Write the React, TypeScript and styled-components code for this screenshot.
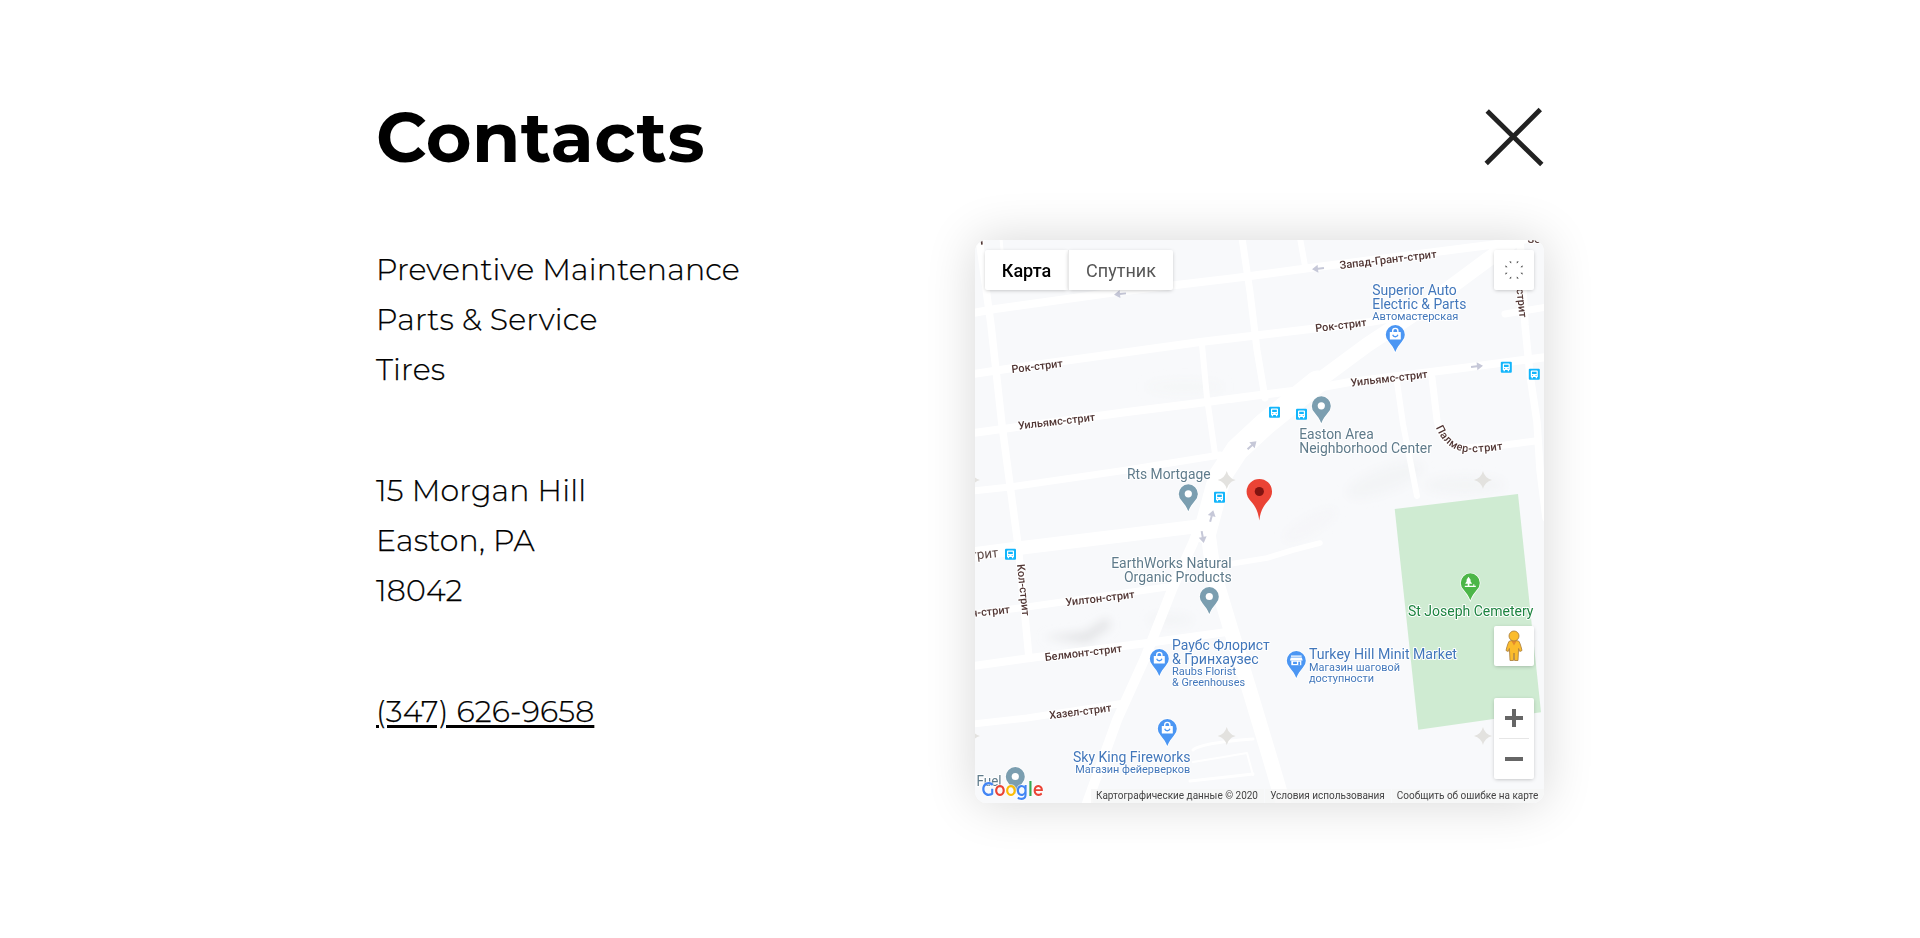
import React from "react";
import styled, { createGlobalStyle } from "styled-components";

const GlobalStyle = createGlobalStyle`
  * { box-sizing: border-box; }
  body { margin: 0; background: #fff; color: #000; }
`;

const Page = styled.main`
  width: 1170px;
  min-height: 938px;
  margin: 0 auto;
  padding-top: 94px;
  font-family: Montserrat, Inter, "Noto Sans", sans-serif;
`;

const Header = styled.header`
  display: flex;
  align-items: center;
  justify-content: space-between;
  height: 86px;
  margin-bottom: 60px;
`;

const Title = styled.h1`
  margin: 0 0 0 1px;
  font-size: 70px;
  font-weight: 700;
  line-height: 86px;
  letter-spacing: 0.4px;
`;

const CloseButton = styled.button`
  display: flex;
  padding: 0;
  border: 0;
  background: none;
  cursor: pointer;
`;

const Columns = styled.div`
  display: flex;
  justify-content: space-between;
`;

const Info = styled.div`
  display: flex;
  flex-direction: column;
  gap: 71px;
  padding: 5px 0 0 1px;
  font-size: 30px;
  font-weight: 300;
  line-height: 50px;
  letter-spacing: 0.2px;
  -webkit-text-stroke: 0.25px #000;
`;

const Block = styled.p`
  display: flex;
  flex-direction: column;
  align-items: flex-start;
  margin: 0;
`;

const Line = styled.span`
  white-space: nowrap;
`;

const Phone = styled.a`
  color: inherit;
  white-space: nowrap;
  text-decoration: underline;
  text-decoration-thickness: 3px;
  text-underline-offset: 3px;
`;

const MapCard = styled.section`
  position: relative;
  width: 569px;
  height: 563px;
  overflow: hidden;
  border-radius: 12px;
  background: #f8f9fb;
  font-family: Roboto, sans-serif;
`;

const MapFrame = styled.div`
  width: 569px;
  margin-right: 1px;
  border-radius: 12px;
  box-shadow: 0 0 50px rgba(0, 0, 0, 0.16);
`;

const MapTypes = styled.div`
  position: absolute;
  top: 10px;
  left: 10px;
  display: flex;
`;

const MapType = styled.button<{ $active?: boolean }>`
  width: ${(p) => (p.$active ? 83 : 105)}px;
  height: 40px;
  padding: 0;
  border: 0;
  border-left: ${(p) => (p.$active ? "0" : "1px solid #e9e9e9")};
  border-radius: ${(p) => (p.$active ? "2px 0 0 2px" : "0 2px 2px 0")};
  background: #fff;
  box-shadow: 0 1px 4px -1px rgba(0, 0, 0, 0.3);
  font-family: Roboto, sans-serif;
  font-size: 18px;
  font-weight: ${(p) => (p.$active ? 500 : 400)};
  color: ${(p) => (p.$active ? "#000" : "#565656")};
`;

const MapButton = styled.button<{ $top: number; $height?: number }>`
  position: absolute;
  top: ${(p) => p.$top}px;
  right: 10px;
  display: flex;
  flex-direction: column;
  align-items: center;
  justify-content: center;
  width: 40px;
  height: ${(p) => p.$height ?? 40}px;
  padding: 0;
  border: 0;
  border-radius: 2px;
  background: #fff;
  box-shadow: 0 1px 4px -1px rgba(0, 0, 0, 0.3);
`;

const ZoomHalf = styled.span`
  display: flex;
  align-items: center;
  justify-content: center;
  width: 30px;
  height: 40px;
  & + & { border-top: 1px solid #e6e6e6; height: 41px; }
`;

const Attribution = styled.footer`
  position: absolute;
  right: 0;
  bottom: 0;
  display: flex;
  gap: 1px;
  height: 14px;
`;

const Credit = styled.span<{ $width: number }>`
  width: ${(p) => p.$width}px;
  padding-right: 1px;
  background: rgba(245, 245, 245, 0.75);
  color: #444;
  font-size: 10px;
  line-height: 14px;
  text-align: center;
  white-space: nowrap;
`;

const Drawing = styled.svg`
  display: block;
`;

const roads: [string, number][] = [
  ["M4,-2 L16,85 L27,185 L43,305 L47,345 L54,418", 7.5],
  ["M-2,73 L20,69 L142,52 L268,37 L342,27 L515,5 L572,-4", 8],
  ["M-2,134 L38,128 L225,102 L285,95 L395,82 L440,74", 8],
  ["M530,74 L572,67", 7],
  ["M-2,193 L152,172 L232,162 L285,155 L342,148 L375,142 L488,128 L548,120 L572,117", 8],
  ["M-2,251 L35,247 L152,230 L245,215", 7],
  ["M-2,314 L45,308 L152,295 L225,286", 13.5],
  ["M267,-2 L275,52 L282,110 L290,158", 7],
  ["M227,105 L232,158 L240,214", 6],
  ["M325,-2 L330,26", 6],
  ["M26,-2 L27,10", 3],
  ["M545,0 L550,85 L555,135 L562,182 L565,230 L571,278", 7.5],
  ["M457,138 L462,180 Q467,207 490,208 L530,205 L560,201", 7],
  ["M422,142 L428,184 L442,256", 6],
  ["M345,303 L318,310 L292,318 L255,324", 5.5],
  ["M-2,374 L52,367 L192,347", 7],
  ["M-2,426 L55,418 L172,403 L252,392", 8],
  ["M-2,484 L52,478 L150,463", 7],
  ["M545,-4 L515,18 L442,72 L392,105 L342,142 L300,172", 15],
  ["M342,142 L290,184 L262,210 L245,236 L238,262 L230,292", 23],
  ["M225,285 L218,303 L198,347 L170,418 L142,480 L111,566", 10],
  ["M232,285 L238,330 L256,390 L276,455 L294,515 L309,566", 15],
  ["M218,510 Q225,503 278,499", 3],
  ["M218,522 L272,513 L278,535", 2],
  ["M215,541 L278,534", 3],
];

type LabelData = {
  x: number; y: number; w?: number; t: string; size?: number; angle?: number;
  color: string; bold?: boolean; anchor?: "end";
};
const street = "#523735";
const blue = "#4277bb";
const slate = "#5f7b8b";

const labels: LabelData[] = [
  { x: 365, y: 29, w: 97.5, t: "Запад-Грант-стрит", angle: -6.7, color: street, bold: true },
  { x: 340.7, y: 92, w: 51.5, t: "Рок-стрит", angle: -6.7, color: street, bold: true },
  { x: 37, y: 133, w: 51.5, t: "Рок-стрит", angle: -6.7, color: street, bold: true },
  { x: 376, y: 146.5, w: 77.5, t: "Уильямс-стрит", angle: -6.5, color: street, bold: true },
  { x: 43.5, y: 189.5, w: 77.5, t: "Уильямс-стрит", angle: -6.5, color: street, bold: true },
  { x: 91, y: 366, w: 69.5, t: "Уилтон-стрит", angle: -6.7, color: street, bold: true },
  { x: 70.3, y: 421, w: 77.5, t: "Белмонт-стрит", angle: -6.7, color: street, bold: true },
  { x: 74.7, y: 479, w: 62.5, t: "Хазел-стрит", angle: -7, color: street, bold: true },
  { x: 42, y: 324.5, w: 52, t: "Кол-стрит", angle: 84, color: street, bold: true },
  { x: 541.5, y: 49, w: 29, t: "стрит", angle: 84, color: street, bold: true },
  { x: 35.3, y: 373, w: 39, t: "н-стрит", angle: -6, color: street, bold: true, anchor: "end" },
  { x: 23.7, y: 317, w: 28, t: "трит", size: 13.5, angle: -6, color: "#5f4b48", anchor: "end" },
  { x: 552.5, y: 2.5, t: "Se", color: street, bold: true },
  { x: 3.5, y: 5, w: 7, t: "т", angle: -6, color: street, bold: true },
  { x: 397.3, y: 55, w: 84.5, t: "Superior Auto", size: 14, color: blue },
  { x: 397.3, y: 69, w: 94, t: "Electric & Parts", size: 14, color: blue },
  { x: 397.3, y: 79.7, w: 86, t: "Автомастерская", color: blue },
  { x: 324.2, y: 199, w: 74.5, t: "Easton Area", size: 14, color: slate },
  { x: 324.2, y: 213, w: 132.7, t: "Neighborhood Center", size: 14, color: slate },
  { x: 152, y: 239, w: 83.5, t: "Rts Mortgage", size: 14, color: slate },
  { x: 136.2, y: 328, w: 120.5, t: "EarthWorks Natural", size: 14, color: slate },
  { x: 149, y: 342, w: 107.7, t: "Organic Products", size: 14, color: slate },
  { x: 433, y: 376, w: 125.5, t: "St Joseph Cemetery", size: 14, color: "#1d8440" },
  { x: 197, y: 410, w: 97.8, t: "Раубс Флорист", size: 14, color: blue },
  { x: 197, y: 424, w: 86.8, t: "& Гринхаузес", size: 14, color: blue },
  { x: 197, y: 434.7, w: 64, t: "Raubs Florist", color: blue },
  { x: 197, y: 445.7, w: 73, t: "& Greenhouses", color: blue },
  { x: 334, y: 419, w: 148, t: "Turkey Hill Minit Market", size: 14, color: blue },
  { x: 334, y: 431, w: 91, t: "Магазин шаговой", color: blue },
  { x: 334, y: 441.7, w: 65, t: "доступности", color: blue },
  { x: 98, y: 522, w: 117.5, t: "Sky King Fireworks", size: 14, color: blue },
  { x: 100.3, y: 533, w: 115, t: "Магазин фейерверков", color: blue },
  { x: 1.5, y: 546, w: 25, t: "Fuel", size: 14, color: slate },
];

function Label({ x, y, w, t, size = 11, angle = 0, color, bold, anchor }: LabelData) {
  return (
    <text
      transform={`translate(${x} ${y}) rotate(${angle})`}
      fontSize={size}
      fontWeight={bold ? 500 : 400}
      fill={color}
      textAnchor={anchor}
      textLength={w}
      lengthAdjust="spacingAndGlyphs"
    >
      {t}
    </text>
  );
}

type PinKind = "dot" | "bag" | "shop" | "tree";
const pins: [number, number, PinKind][] = [
  [420.3, 112, "bag"],
  [346.3, 183.3, "dot"],
  [213.3, 271.3, "dot"],
  [234.3, 374, "dot"],
  [495.3, 360.3, "tree"],
  [184.3, 436, "bag"],
  [192.3, 506, "bag"],
  [321.3, 438, "shop"],
  [40.3, 554, "dot"],
];

function Pin({ x, y, kind }: { x: number; y: number; kind: PinKind }) {
  const fill = kind === "dot" ? "#7b9eb0" : kind === "tree" ? "#4cb648" : "#4b96f3";
  return (
    <g transform={`translate(${x} ${y})`}>
      <path
        d="M0,0 C-1.6,-4.4 -4,-7.4 -6.6,-10.6 A9.5,9.5 0 1 1 6.6,-10.6 C4,-7.4 1.6,-4.4 0,0Z"
        fill={fill}
        stroke="#fff"
        strokeWidth="1.4"
        paintOrder="stroke"
      />
      {kind === "dot" && <circle cy="-17.5" r="3.6" fill="#fff" />}
      {kind === "bag" && (
        <>
          <path d="M-2.6,-19.5 V-21 A2.6,2.6 0 0 1 2.6,-21 V-19.5" fill="none" stroke="#fff" strokeWidth="1.4" />
          <rect x="-5.5" y="-20" width="11" height="7.5" rx="0.6" fill="#fff" />
          <path d="M-2.6,-17.2 A2.7,2.7 0 0 0 2.6,-17.2" fill="none" stroke={fill} strokeWidth="1.3" />
        </>
      )}
      {kind === "shop" && (
        <>
          <path d="M-5.3,-22.6 H5.3 V-21.3 H-5.3Z M-5.5,-20.6 H5.5 L6.4,-17.5 H-6.4Z" fill="#fff" />
          <path d="M-5,-17.5 H5 V-12.8 H-5Z" fill="#fff" />
          <path d="M-3.2,-16.3 H0.6 V-14 H-3.2Z M2,-16.3 H3.8 V-12.8 H2Z" fill={fill} />
        </>
      )}
      {kind === "tree" && (
        <path d="M-1.8,-23.5 L0.8,-19.8 H-0.2 L1.8,-16.6 H-0.9 V-14.6 H3 V-16 H4 V-14.6 H5.5 V-13.4 H-5.5 V-14.6 H-2.6 V-16.6 H-5.2 L-3.2,-19.8 H-4.2Z" fill="#fff" />
      )}
    </g>
  );
}

const stops = [[531.3, 127.3], [559.3, 134.3], [299.5, 172.3], [326.5, 174.3], [244.5, 257.3], [35.5, 314.3]];
const stars = [[-4, 240], [251.7, 240], [508, 240], [-4, 496], [251.7, 496], [508, 496]];
const arrows = [[145, 54, 174], [343, 28.7, 174], [502, 126.3, -6], [277, 205.3, -42], [236.7, 276, -75], [227.7, 297, 80]];

function MapDrawing() {
  return (
    <Drawing width="569" height="563" viewBox="0 0 569 563">
      <defs>
        <filter id="soft" x="-50%" y="-50%" width="200%" height="200%">
          <feGaussianBlur stdDeviation="5" />
        </filter>
        <path id="palmer" d="M461,187.5 C466.5,201.5 478.5,212 494,212.2 C506,212.2 518,211 532,209" />
      </defs>
      <rect width="569" height="563" fill="#f8f9fb" />
      <g filter="url(#soft)" fill="#f3f4f6">
        <path d="M68,397 L112,403 L136,386 L132,378 L110,392Z" fill="#e3e4e6" />
        <ellipse cx="195" cy="380" rx="22" ry="6" />
        <ellipse cx="410" cy="240" rx="40" ry="12" transform="rotate(-20 410 240)" />
        <ellipse cx="490" cy="245" rx="40" ry="9" />
        <ellipse cx="335" cy="285" rx="30" ry="8" transform="rotate(-30 335 285)" opacity=".6" />
        <ellipse cx="210" cy="147" rx="40" ry="8" opacity=".4" />
      </g>
      <path d="M419.7,269 L543,254 L566,472.3 L443.3,489.7Z" fill="#cfebd2" />
      <g fill="none" stroke="#fff" strokeLinejoin="round" strokeLinecap="round">
        {roads.map(([d, w]) => <path key={d} d={d} strokeWidth={w} />)}
      </g>
      {stars.map(([x, y]) => (
        <path key={`${x}-${y}`} transform={`translate(${x} ${y})`} fill="#e3e2df"
          d="M0,-9 Q1.8,-1.8 9,0 Q1.8,1.8 0,9 Q-1.8,1.8 -9,0 Q-1.8,-1.8 0,-9Z" />
      ))}
      {arrows.map(([x, y, a]) => (
        <path key={`${x}-${y}`} transform={`translate(${x} ${y}) rotate(${a})`} fill="#c6c8d8"
          d="M-6,-1 H0 V-4 L6,0 L0,4 V1 H-6Z" />
      ))}
      {stops.map(([x, y]) => (
        <g key={x} transform={`translate(${x} ${y})`}>
          <rect x="-5.5" y="-5.5" width="11" height="11" rx="1" fill="#12b5fb" />
          <path d="M-3.5,-3 Q-3.5,-3.8 -2.6,-3.8 H2.6 Q3.5,-3.8 3.5,-3 V2.6 H2.8 V4 H1.4 V2.6 H-1.4 V4 H-2.8 V2.6 H-3.5Z" fill="#fff" />
          <path d="M-2.3,-2.6 H2.3 V-0.2 H-2.3Z M-2.3,0.9 H-1.2 V1.8 H-2.3Z M1.2,0.9 H2.3 V1.8 H1.2Z" fill="#12b5fb" />
        </g>
      ))}
      {pins.map(([x, y, kind]) => <Pin key={`${x}-${y}`} x={x} y={y} kind={kind} />)}
      <g stroke="#fff" strokeWidth="2" strokeLinejoin="round" paintOrder="stroke">
        {labels.map((l) => <Label key={`${l.x}-${l.y}`} {...l} />)}
        <text fontSize="11" fontWeight="500" fill={street}>
          <textPath href="#palmer" textLength="78">Палмер-стрит</textPath>
        </text>
      </g>
      <path d="M284.3,280.5 C283,269 278.5,264.5 274.6,259.8 A12.7,12.7 0 1 1 294,259.8 C290.1,264.5 285.6,269 284.3,280.5Z" fill="#ea4335" />
      <circle cx="284.3" cy="251.5" r="4.6" fill="#811411" />
      <text x="6.5" y="555.5" fontSize="21" fontWeight="600" textLength="62" lengthAdjust="spacingAndGlyphs"
        fontFamily="Montserrat, Inter, sans-serif" stroke="#fff" strokeOpacity="0.7" strokeWidth="1.5" paintOrder="stroke">
        <tspan fill="#4285f4">G</tspan><tspan fill="#ea4335">o</tspan><tspan fill="#fbbc05">o</tspan>
        <tspan fill="#4285f4">g</tspan><tspan fill="#34a853">l</tspan><tspan fill="#ea4335">e</tspan>
      </text>
    </Drawing>
  );
}

export default function App() {
  return (
    <>
      <GlobalStyle />
      <Page>
        <Header>
          <Title>Contacts</Title>
          <CloseButton aria-label="Close">
            <svg width="61" height="60" viewBox="0 0 61 60" stroke="#222" strokeWidth="4.8">
              <path d="M3.2,4 L57.8,57.5 M56.3,2.5 L2.2,56.5" />
            </svg>
          </CloseButton>
        </Header>
        <Columns>
          <Info>
            <Block>
              <Line>Preventive Maintenance</Line>
              <Line>Parts &amp; Service</Line>
              <Line>Tires</Line>
            </Block>
            <Block>
              <Line>15 Morgan Hill</Line>
              <Line>Easton, PA</Line>
              <Line>18042</Line>
            </Block>
            <Block>
              <Phone href="tel:3476269658">(347) 626-9658</Phone>
            </Block>
          </Info>
          <MapFrame>
            <MapCard>
              <MapDrawing />
              <MapTypes>
                <MapType $active>Карта</MapType>
                <MapType>Спутник</MapType>
              </MapTypes>
              <MapButton $top={10} aria-label="Fullscreen">
                <svg width="18" height="18" viewBox="0 0 18 18" fill="#333">
                  <path d="M4.2,0.5 h2 v2z M11.8,0.5 h2 l-2,2z M0.5,4.2 l2,2 h-2z M17.5,4.2 v2 h-2z M0.5,11.8 h2 l-2,2z M17.5,13.8 v-2 h-2z M4.2,17.5 l2,-2 v2z M13.8,17.5 l-2,-2 v2z" />
                </svg>
              </MapButton>
              <MapButton $top={386} aria-label="Pegman">
                <svg width="18" height="32" viewBox="0 0 18 32" fill="#fbbc2c" stroke="#a87b3a" strokeWidth="0.8">
                  <path d="M4.5,11 Q9,9.5 13.5,11 Q15,12 17,20.5 L14.8,21.5 L13.6,18.5 L13,30.5 H9.6 L9,23 L8.4,30.5 H5 L4.4,18.5 L3.2,21.5 L1,20.5 Q3,12 4.5,11Z" />
                  <path d="M6.4,11 H11.6 L9,15.5Z" fill="#e58b2c" stroke="none" />
                  <circle cx="9" cy="6" r="5" />
                </svg>
              </MapButton>
              <MapButton as="div" $top={458} $height={81}>
                <ZoomHalf>
                  <svg width="18" height="18" stroke="#666" strokeWidth="4"><path d="M0,9 H18 M9,0 V18" /></svg>
                </ZoomHalf>
                <ZoomHalf>
                  <svg width="18" height="18" stroke="#666" strokeWidth="4"><path d="M0,9 H18" /></svg>
                </ZoomHalf>
              </MapButton>
              <Attribution>
                <Credit $width={173}>Картографические данные © 2020</Credit>
                <Credit $width={126}>Условия использования</Credit>
                <Credit $width={152}>Сообщить об ошибке на карте</Credit>
              </Attribution>
            </MapCard>
          </MapFrame>
        </Columns>
      </Page>
    </>
  );
}
